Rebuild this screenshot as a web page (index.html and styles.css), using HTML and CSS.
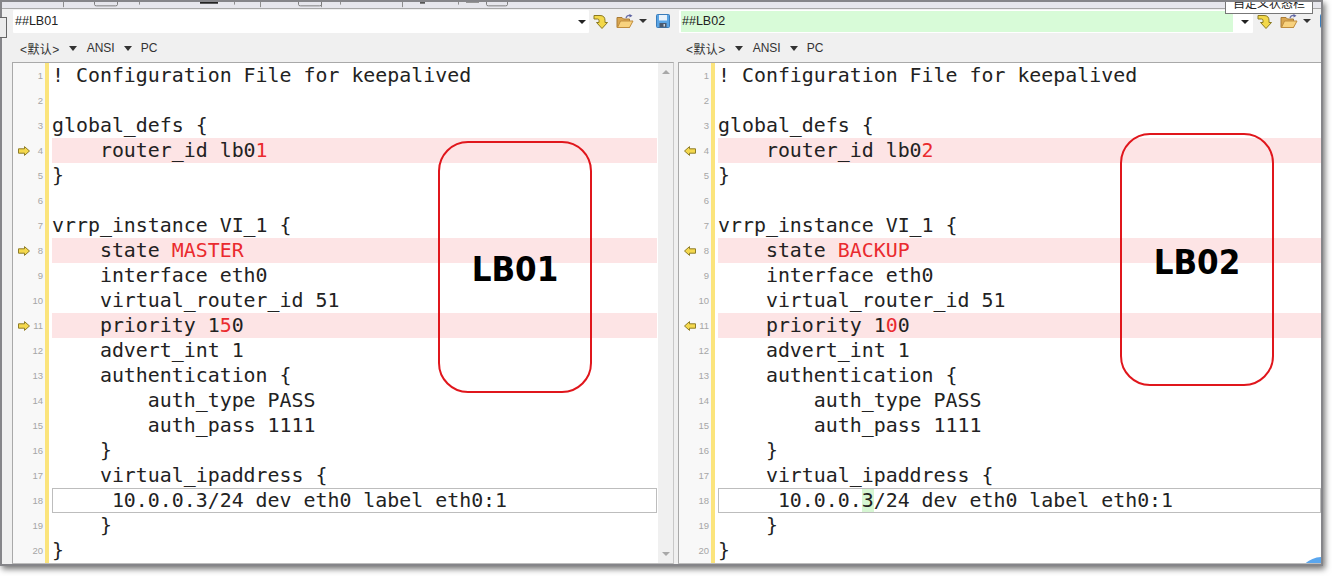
FILE: index.html
```html
<!DOCTYPE html>
<html lang="zh">
<head>
<meta charset="utf-8">
<title>Compare</title>
<link rel="stylesheet" href="styles.css">
</head>
<body>
<svg class="defs" width="0" height="0">
  <symbol id="ret" viewBox="0 0 15 16"><path d="M1 1.5h6q5 0 5 5v2h2.5l-5.500 6-5.500-6H6v-2q0-1.500-1.500-1.500H1z" fill="#f3d84a" stroke="#8b7a22"/></symbol>
  <symbol id="folder" viewBox="0 0 18 15"><path d="M1 3.500h5l1.500 1.500h6v8.500H1z" fill="#d9a650" stroke="#a87a35"/><path d="M1.500 13.500l3-6.500h12.500l-3.500 6.500z" fill="#f8d27e" stroke="#c08d3e"/><path d="M10 4q1-3 4-2.500" fill="none" stroke="#6a6fa8" stroke-width="1.300"/><path d="M13.500 0l3 1.800-3 1.700z" fill="#5a60a0"/></symbol>
  <symbol id="save" viewBox="0 0 14 14"><rect x=".5" y=".5" width="13" height="13" rx="1" fill="#5aa4e4" stroke="#3a7cba"/><rect x="3" y="1" width="8" height="5.500" fill="#e8f2fb"/><rect x="3.500" y="9" width="7" height="4.500" fill="#4a5a6e"/><rect x="7.500" y="10" width="1.500" height="2.500" fill="#c8d4e0"/></symbol>
  <symbol id="arrow" viewBox="0 0 12 10"><path d="M.5 2.800h6V.6L11.500 5l-5 4.400V7.200h-6z" fill="#f5d94e" stroke="#8f7d28"/></symbol>
</svg>

<main class="window">
  <svg class="strip" viewBox="0 0 1319 7" preserveAspectRatio="none">
    <g fill="#8d8d8d">
      <rect x="61" y="0" width="1" height="6"/><rect x="258" y="0" width="1" height="6"/><rect x="319" y="0" width="1" height="6"/><rect x="400" y="0" width="1" height="6"/>
      <rect x="137" y="0" width="1" height="3"/><rect x="232" y="0" width="1" height="3"/><rect x="338" y="0" width="1" height="3"/><rect x="456" y="0" width="1" height="3"/>
    </g>
    <g fill="none" stroke="#777"><path d="M92.500 0v3q0 1.500 2 1.500h19q2 0 2-1.500V0"/><path d="M296.500 0v3q0 1.500 2 1.500h19q2 0 2-1.500V0"/><path d="M484.500 0v3q0 1.500 2 1.500h17q2 0 2-1.500V0"/></g>
    <rect x="198" y="0" width="18" height="2" fill="#222"/><rect x="418" y="0" width="5" height="2" fill="#555"/><rect x="464" y="0" width="13" height="1" fill="#888"/>
  </svg>
  <div class="panes">
    <section class="pane pane-left">
      <div class="file-bar">
        <div class="path"><span class="path-text">##LB01</span><i class="caret"></i></div>
        <div class="tools">
          <svg class="ic-ret"><use href="#ret"/></svg>
          <svg class="ic-folder"><use href="#folder"/></svg>
          <i class="caret tool-caret"></i>
          <svg class="ic-save"><use href="#save"/></svg>
        </div>
      </div>
      <div class="enc-bar"><span class="enc-a">&lt;默认&gt;</span><i class="caret"></i><span>ANSI</span><i class="caret"></i><span>PC</span></div>
      <div class="editor">
        <div class="rows">
          <div class="row"><div class="gut"><b>1</b></div><i class="mark"></i><pre class="code">! Configuration File for keepalived</pre></div>
          <div class="row"><div class="gut"><b>2</b></div><i class="mark"></i><pre class="code"></pre></div>
          <div class="row"><div class="gut"><b>3</b></div><i class="mark"></i><pre class="code">global_defs {</pre></div>
          <div class="row"><div class="gut"><svg class="flag"><use href="#arrow"/></svg><b>4</b></div><i class="mark"></i><pre class="code diff">    router_id lb0<em>1</em></pre></div>
          <div class="row"><div class="gut"><b>5</b></div><i class="mark"></i><pre class="code">}</pre></div>
          <div class="row"><div class="gut"><b>6</b></div><i class="mark"></i><pre class="code"></pre></div>
          <div class="row"><div class="gut"><b>7</b></div><i class="mark"></i><pre class="code">vrrp_instance VI_1 {</pre></div>
          <div class="row"><div class="gut"><svg class="flag"><use href="#arrow"/></svg><b>8</b></div><i class="mark"></i><pre class="code diff">    state <em>MASTER</em></pre></div>
          <div class="row"><div class="gut"><b>9</b></div><i class="mark"></i><pre class="code">    interface eth0</pre></div>
          <div class="row"><div class="gut"><b>10</b></div><i class="mark"></i><pre class="code">    virtual_router_id 51</pre></div>
          <div class="row"><div class="gut"><svg class="flag"><use href="#arrow"/></svg><b>11</b></div><i class="mark"></i><pre class="code diff">    priority 1<em>5</em>0</pre></div>
          <div class="row"><div class="gut"><b>12</b></div><i class="mark"></i><pre class="code">    advert_int 1</pre></div>
          <div class="row"><div class="gut"><b>13</b></div><i class="mark"></i><pre class="code">    authentication {</pre></div>
          <div class="row"><div class="gut"><b>14</b></div><i class="mark"></i><pre class="code">        auth_type PASS</pre></div>
          <div class="row"><div class="gut"><b>15</b></div><i class="mark"></i><pre class="code">        auth_pass 1111</pre></div>
          <div class="row"><div class="gut"><b>16</b></div><i class="mark"></i><pre class="code">    }</pre></div>
          <div class="row"><div class="gut"><b>17</b></div><i class="mark"></i><pre class="code">    virtual_ipaddress {</pre></div>
          <div class="row"><div class="gut"><b>18</b></div><i class="mark"></i><pre class="code current">     10.0.0.3/24 dev eth0 label eth0:1</pre></div>
          <div class="row"><div class="gut"><b>19</b></div><i class="mark"></i><pre class="code">    }</pre></div>
          <div class="row"><div class="gut"><b>20</b></div><i class="mark"></i><pre class="code">}</pre></div>
        </div>
        <div class="scroll"><i class="sc-up"></i><i class="sc-down"></i></div>
      </div>
    </section>

    <section class="pane pane-right">
      <div class="file-bar">
        <div class="path"><span class="path-text path-new">##LB02</span><i class="caret"></i></div>
        <div class="tools">
          <svg class="ic-ret"><use href="#ret"/></svg>
          <svg class="ic-folder"><use href="#folder"/></svg>
          <i class="caret tool-caret"></i>
          <svg class="ic-save"><use href="#save"/></svg>
        </div>
      </div>
      <div class="enc-bar"><span class="enc-a">&lt;默认&gt;</span><i class="caret"></i><span>ANSI</span><i class="caret"></i><span>PC</span></div>
      <div class="editor">
        <div class="rows">
          <div class="row"><div class="gut"><b>1</b></div><i class="mark"></i><pre class="code">! Configuration File for keepalived</pre></div>
          <div class="row"><div class="gut"><b>2</b></div><i class="mark"></i><pre class="code"></pre></div>
          <div class="row"><div class="gut"><b>3</b></div><i class="mark"></i><pre class="code">global_defs {</pre></div>
          <div class="row"><div class="gut"><svg class="flag flip"><use href="#arrow"/></svg><b>4</b></div><i class="mark"></i><pre class="code diff">    router_id lb0<em>2</em></pre></div>
          <div class="row"><div class="gut"><b>5</b></div><i class="mark"></i><pre class="code">}</pre></div>
          <div class="row"><div class="gut"><b>6</b></div><i class="mark"></i><pre class="code"></pre></div>
          <div class="row"><div class="gut"><b>7</b></div><i class="mark"></i><pre class="code">vrrp_instance VI_1 {</pre></div>
          <div class="row"><div class="gut"><svg class="flag flip"><use href="#arrow"/></svg><b>8</b></div><i class="mark"></i><pre class="code diff">    state <em>BACKUP</em></pre></div>
          <div class="row"><div class="gut"><b>9</b></div><i class="mark"></i><pre class="code">    interface eth0</pre></div>
          <div class="row"><div class="gut"><b>10</b></div><i class="mark"></i><pre class="code">    virtual_router_id 51</pre></div>
          <div class="row"><div class="gut"><svg class="flag flip"><use href="#arrow"/></svg><b>11</b></div><i class="mark"></i><pre class="code diff">    priority 1<em>0</em>0</pre></div>
          <div class="row"><div class="gut"><b>12</b></div><i class="mark"></i><pre class="code">    advert_int 1</pre></div>
          <div class="row"><div class="gut"><b>13</b></div><i class="mark"></i><pre class="code">    authentication {</pre></div>
          <div class="row"><div class="gut"><b>14</b></div><i class="mark"></i><pre class="code">        auth_type PASS</pre></div>
          <div class="row"><div class="gut"><b>15</b></div><i class="mark"></i><pre class="code">        auth_pass 1111</pre></div>
          <div class="row"><div class="gut"><b>16</b></div><i class="mark"></i><pre class="code">    }</pre></div>
          <div class="row"><div class="gut"><b>17</b></div><i class="mark"></i><pre class="code">    virtual_ipaddress {</pre></div>
          <div class="row"><div class="gut"><b>18</b></div><i class="mark"></i><pre class="code current">     10.0.0.<u>3</u>/24 dev eth0 label eth0:1</pre></div>
          <div class="row"><div class="gut"><b>19</b></div><i class="mark"></i><pre class="code">    }</pre></div>
          <div class="row"><div class="gut"><b>20</b></div><i class="mark"></i><pre class="code">}</pre></div>
        </div>
        <div class="float-btn"></div>
      </div>
    </section>
  </div>

  <div class="side-tab"></div>
  <div class="tooltip"><span>自定义状态栏</span></div>
  <div class="note note-a"><strong>LB01</strong></div>
  <div class="note note-b"><strong>LB02</strong></div>
</main>
</body>
</html>
```

FILE: styles.css
```css
* { box-sizing: border-box; }
html, body { margin: 0; padding: 0; background: #fff; }
body { width: 1332px; height: 576px; overflow: hidden; font-family: "Liberation Sans", "Noto Sans CJK SC", sans-serif; }
.defs { position: absolute; }

.window {
  position: relative;
  width: 1323px;
  height: 566px;
  background: #f0f0f0;
  border-style: solid;
  border-color: #858589;
  border-width: 2px;
  box-shadow: 2px 3px 6px rgba(0, 0, 0, .55);
  display: flex;
  flex-direction: column;
}
.strip { display: block; width: 100%; height: 7px; flex: none; background: #e6e6ec; border-bottom: 1px solid #a8a8a8; }
.panes { display: flex; flex: 1; min-height: 0; }
.pane { display: flex; flex-direction: column; min-width: 0; }
.pane-left { width: 674px; flex: none; padding: 0 2px 0 10px; }
.pane-right { flex: 1; padding-left: 2px; overflow: hidden; }
.pane-right .file-bar { padding-left: 1px; }
.pane-right .enc-bar { padding-left: 8px; }

.file-bar { display: flex; align-items: flex-start; height: 25px; padding: 1px 0 0 1px; flex: none; }
.path { width: 576px; height: 23px; background: #fff; display: flex; align-items: center; flex: none; border-radius: 1px; }
.pane-right .path { width: 574px; padding-left: 2px; }
.path-text { flex: 1; align-self: stretch; font-size: 12.500px; line-height: 22px; color: #222; padding-left: 2px; }
.path-new { background: #d8fbd8; margin: 1px 0; line-height: 20px; padding-left: 1px; }
.caret { display: block; flex: none; width: 0; height: 0; border-style: solid; border-width: 4px 4px 0; border-color: #222 transparent transparent; }
.path .caret { margin: 0 3px 0 4px; }
.pane-right .path .caret { margin: 0 4px 0 8px; }
.tools { display: flex; align-items: flex-start; flex: none; padding: 4px 0 0 4px; }
.ic-ret { width: 15px; height: 16px; flex: none; }
.ic-folder { width: 18px; height: 15px; margin-left: 8px; flex: none; }
.tool-caret { margin: 5px 0 0 5px; border-top-color: #333; }
.ic-save { width: 14px; height: 14px; margin-left: 9px; flex: none; }

.enc-bar { display: flex; align-items: center; height: 28px; padding-left: 8px; font-size: 12px; color: #333; flex: none; }
.enc-a { letter-spacing: .4px; }
.enc-bar .caret { border-top-color: #333; border-width: 5px 4px 0; margin: 0 10px 0 9px; }
.enc-bar .caret + span + .caret { margin-right: 9px; }

.editor { position: relative; flex: 1; display: flex; min-height: 0; background: #fff; border: 1px solid #a9a9a9; border-bottom-color: #bdbdbd; border-right-color: #c8c8c8; overflow: hidden; }
.rows { flex: 1; min-width: 0; }
.pane-right .editor { border-right: 0; }
.pane-left .rows { margin-right: 1px; }
.row { display: flex; height: 25px; }
.gut { width: 32px; flex: none; background: #f8f8f8; display: flex; align-items: center; padding: 0 2px 0 5px; }
.gut b { margin-left: auto; font-weight: 400; font-size: 9.500px; color: #a6a6a6; }
.flag { width: 12px; height: 10px; flex: none; }
.flip { transform: scaleX(-1); }
.mark { width: 4px; flex: none; background: #fbe47c; }
.code {
  flex: 1;
  min-width: 0;
  margin: 0 0 0 3px;
  font-family: "DejaVu Sans Mono", "Liberation Mono", monospace;
  font-size: 19.900px;
  line-height: 25px;
  color: #222;
  white-space: pre;
  overflow: hidden;
}
.diff { background: #fde4e5; }
.code em { font-style: normal; color: #ea2a2e; }
.code u { text-decoration: none; background: #d6f6d2; }
.current { box-shadow: inset 0 0 0 1px #bdbdbd; }

.scroll { width: 15px; flex: none; background: #f0f0f0; display: flex; flex-direction: column; justify-content: space-between; align-items: center; padding: 7px 0 7px; }
.sc-up { width: 0; height: 0; border-style: solid; border-width: 0 4px 4px; border-color: transparent transparent #a8a8a8; }
.sc-down { width: 0; height: 0; border-style: solid; border-width: 4px 4px 0; border-color: #a8a8a8 transparent transparent; }

.float-btn { position: absolute; left: 618px; top: 494px; width: 50px; height: 50px; border-radius: 50%; background: #5aa6ee; box-shadow: 0 0 0 2px #fff; }

.side-tab { position: absolute; left: -2px; top: 15px; width: 7px; height: 21px; background: #ececec; border: 1px solid #666; border-left: 0; }
.tooltip { position: absolute; left: 1223px; top: 0; width: 88px; height: 12px; background: #fff; border: 1px solid #777; border-top: 0; overflow: hidden; text-align: center; }
.tooltip span { display: block; margin-top: -6px; font-size: 12px; line-height: 16px; color: #222; }

.note { position: absolute; width: 154px; padding-top: 5px; border: 2px solid #e0161c; border-radius: 30px; display: flex; align-items: center; justify-content: center; }
.note strong { font-family: "DejaVu Sans", "Liberation Sans", sans-serif; font-stretch: condensed; font-weight: 700; font-size: 34.500px; line-height: 1; color: #000; }
.note-a { left: 436px; top: 139px; height: 252px; }
.note-b { left: 1118px; top: 131px; height: 253px; }
```
